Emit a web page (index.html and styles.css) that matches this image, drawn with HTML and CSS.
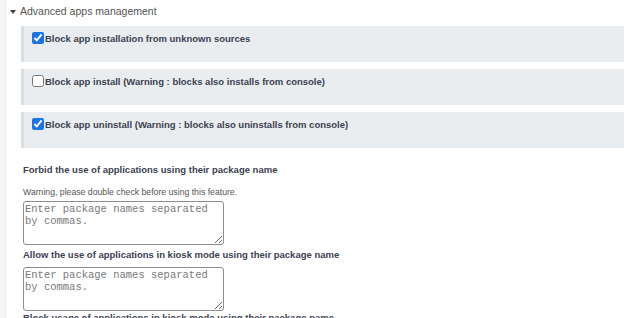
FILE: index.html
```html
<!DOCTYPE html>
<html>
<head>
<meta charset="utf-8">
<link rel="stylesheet" href="styles.css">
</head>
<body>
<div class="page">
  <div class="gutter"></div>
  <div class="content">
    <div class="section-title"><span class="caret"></span>Advanced apps management</div>
    <div class="options">
      <div class="option"><label><input type="checkbox" checked>Block app installation from unknown sources</label></div>
      <div class="option"><label><input type="checkbox">Block app install (Warning : blocks also installs from console)</label></div>
      <div class="option"><label><input type="checkbox" checked>Block app uninstall (Warning : blocks also uninstalls from console)</label></div>
    </div>
    <div class="field first">
      <div class="field-label">Forbid the use of applications using their package name</div>
      <div class="field-help">Warning, please double check before using this feature.</div>
      <textarea class="pkg" placeholder="Enter package names separated by commas."></textarea>
    </div>
    <div class="field">
      <div class="field-label">Allow the use of applications in kiosk mode using their package name</div>
      <textarea class="pkg" placeholder="Enter package names separated by commas."></textarea>
    </div>
    <div class="field last">
      <div class="field-label">Block usage of applications in kiosk mode using their package name</div>
    </div>
  </div>
</div>
</body>
</html>
```
FILE: styles.css
```css
html, body { margin: 0; padding: 0; background: #fff; }
body { font-family: "Helvetica Neue", Arial, "Liberation Sans", sans-serif; color: #3c4250; overflow: hidden; height: 318px; }
.page { display: flex; height: 318px; }
.gutter { width: 5px; background: #f6f6f6; border-right: 1px solid #ececec; flex: none; }
.content { flex: 1; padding-left: 15px; padding-right: 1px; min-width: 0; }
.section-title { font-size: 10.5px; color: #555; height: 22px; display: flex; align-items: center; }
.caret { width: 0; height: 0; border-left: 3.5px solid transparent; border-right: 3.5px solid transparent; border-top: 4px solid #444; margin-left: -11px; margin-right: 4px; margin-top: 1px; }
.options { display: flex; flex-direction: column; gap: 7px; margin-top: 4px; }
.option { background: #eaedef; border-left: 3px solid #dcdfe1; height: 36px; padding: 6px 0 0 8px; box-sizing: border-box; }
.option label { font-size: 9.5px; font-weight: bold; color: #3c4250; display: flex; align-items: center; gap: 1px; height: 12px; }
.option input { width: 12px; height: 12px; margin: 0; accent-color: #1a73e8; flex: none; }
.field { padding-left: 2px; }
.field.first { margin-top: 15px; }
.field-label { font-size: 9.5px; font-weight: bold; color: #3c4250; line-height: 14px; white-space: nowrap; }
.field-help { font-size: 8.7px; color: #555; margin-top: 10px; line-height: 11px; }
.pkg { display: block; width: 201px; height: 44px; box-sizing: border-box; margin-top: 3px; font-family: "Liberation Mono", monospace; font-size: 10.5px; line-height: 12px; padding: 1px 1px; border: 1px solid #8e8e8e; border-radius: 3px; resize: vertical; }
.pkg::placeholder { color: #7a7a7a; }
.field + .field .field-label { margin-top: 3px; }
.field + .field .pkg { margin-top: 5px; }
.field.last .field-label { margin-top: 0; }
```
